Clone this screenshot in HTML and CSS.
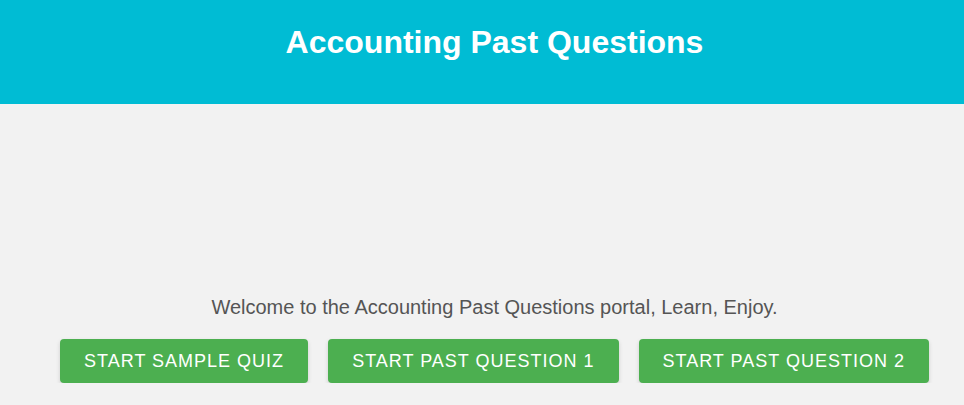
FILE: index.html
```html
<!DOCTYPE html>
<html lang="en">
<head>
  <meta charset="UTF-8">
  <meta name="viewport" content="width=device-width, initial-scale=1.0">
  <title>Accounting Past Questions</title>
  <link rel="stylesheet" href="styles.css">
</head>
<body>
  <header class="header">
    <h1 class="title">Accounting Past Questions</h1>
  </header>
  <main class="main">
    <p class="welcome">Welcome to the Accounting Past Questions portal, Learn, Enjoy.</p>
    <div class="actions">
      <button class="btn">Start Sample Quiz</button>
      <button class="btn">Start Past Question 1</button>
      <button class="btn">Start Past Question 2</button>
    </div>
  </main>
</body>
</html>
```

FILE: styles.css
```css
* {
  margin: 0;
  padding: 0;
  box-sizing: border-box;
}
body {
  font-family: "Liberation Sans", Arial, sans-serif;
  background: #f2f2f2;
}
.header {
  height: 104px;
  background: #00bcd4;
  color: #fff;
  text-align: center;
  padding: 24px 0 0 25px;
}
.title {
  font-size: 32px;
  font-weight: bold;
}
.main {
  padding: 191px 0 0 25px;
  text-align: center;
}
.welcome {
  font-size: 20px;
  color: #555;
  line-height: 24px;
}
.actions {
  display: flex;
  justify-content: center;
  gap: 20px;
  margin-top: 20px;
}
.btn {
  height: 44px;
  padding: 0 24px;
  border: none;
  border-radius: 4px;
  background: #4caf50;
  color: #fff;
  font-family: inherit;
  font-size: 18px;
  letter-spacing: 1px;
  text-transform: uppercase;
  box-shadow: 0 2px 4px rgba(0, 0, 0, 0.15);
  cursor: pointer;
}
```
